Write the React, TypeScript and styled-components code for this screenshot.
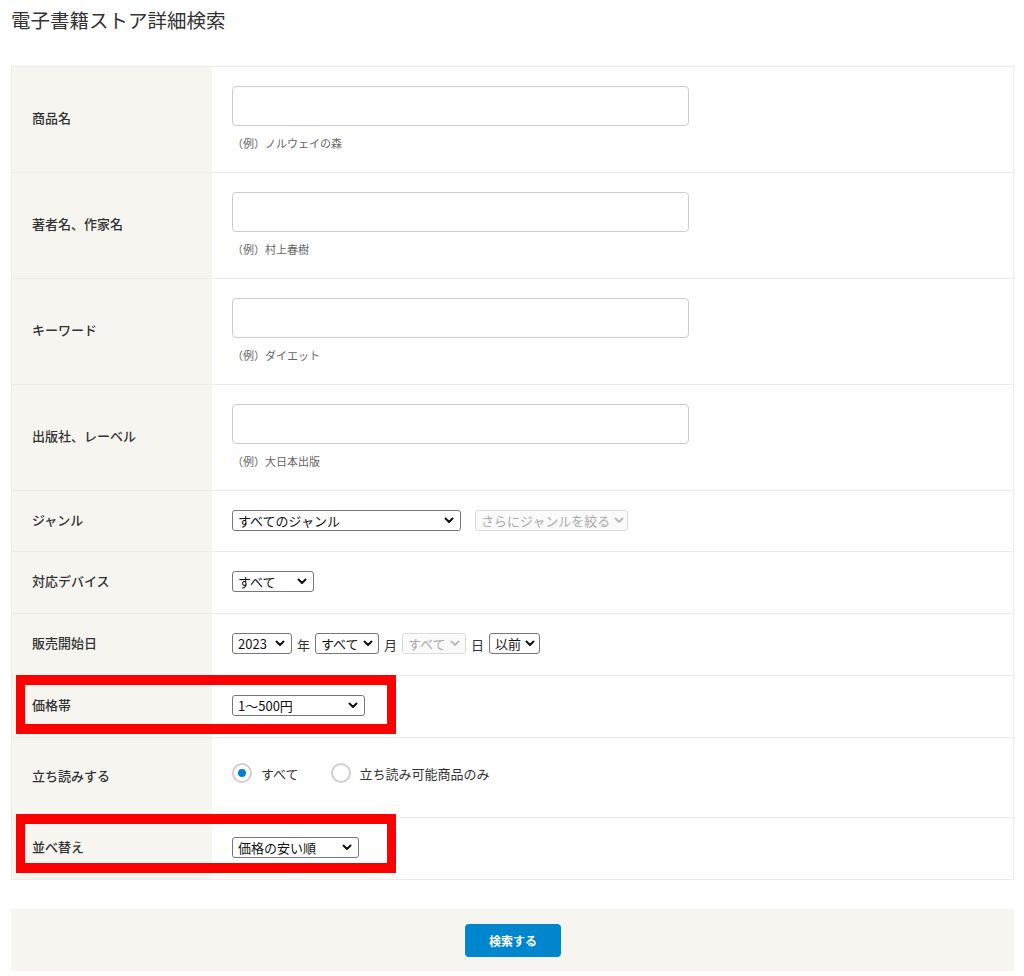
import styled, { createGlobalStyle } from "styled-components";

const GlobalStyle = createGlobalStyle`
  body {
    margin: 0;
    background: #fff;
    color: #333;
    font-family: "Noto Sans CJK JP", "Noto Sans", "Liberation Sans", sans-serif;
  }
`;

const Page = styled.div`
  padding: 6px 10px 6px 11px;
`;

const Title = styled.h1`
  margin: 0 0 32px;
  font-size: 19.5px;
  font-weight: 400;
  line-height: 28px;
  color: #333;
`;

const Table = styled.div`
  border: 1px solid #ececec;
  border-bottom: none;
`;

const Row = styled.div<{ $h: number }>`
  position: relative;
  display: grid;
  grid-template-columns: 200px 1fr;
  min-height: ${(p) => p.$h}px;
  border-bottom: 1px solid #ececec;
`;

const Label = styled.div`
  background: #f6f5ef;
  padding: 0 0 4px 20px;
  display: flex;
  align-items: center;
  font-size: 13px;
  font-weight: 500;
  color: #333;
`;

const Cell = styled.div<{ $pt?: number }>`
  padding: ${(p) => p.$pt ?? 0}px 20px 0 20px;
  display: flex;
  flex-direction: column;
  justify-content: ${(p) => (p.$pt === undefined ? "center" : "flex-start")};
`;

const Inline = styled.div`
  display: flex;
  align-items: center;
  gap: 5px;
  font-size: 13px;
  color: #333;
`;

const TextInput = styled.input`
  box-sizing: border-box;
  width: 457px;
  height: 40px;
  border: 1px solid #ccc;
  border-radius: 4px;
  background: #fff;
`;

const Hint = styled.div`
  margin-top: 9px;
  font-size: 11px;
  line-height: 16px;
  color: #666;
`;

const SelectBox = styled.div<{ $w: number; $disabled?: boolean }>`
  box-sizing: border-box;
  width: ${(p) => p.$w}px;
  height: 21px;
  padding: 0 6px 0 5px;
  margin-top: -2px;
  border: 1px solid ${(p) => (p.$disabled ? "#dcdcdc" : "#777")};
  border-radius: 3px;
  background: ${(p) => (p.$disabled ? "#fafafa" : "#fff")};
  color: ${(p) => (p.$disabled ? "#aaa" : "#111")};
  display: flex;
  align-items: center;
  justify-content: space-between;
  font-size: 13px;
  white-space: nowrap;
  flex-shrink: 0;
  svg {
    margin-left: 4px;
    flex-shrink: 0;
  }
`;

const Spacer = styled.span`
  width: 4px;
`;

const Radios = styled.div`
  display: flex;
  align-items: center;
  gap: 32px;
  font-size: 13px;
  color: #333;
`;

const RadioItem = styled.label`
  display: flex;
  align-items: center;
  gap: 9px;
`;

const RadioCircle = styled.span<{ $on?: boolean }>`
  box-sizing: border-box;
  width: 20px;
  height: 20px;
  border: 2px solid #cfcfcf;
  border-radius: 50%;
  background: #fff;
  display: flex;
  align-items: center;
  justify-content: center;
  &::after {
    content: "";
    width: 8px;
    height: 8px;
    border-radius: 50%;
    background: ${(p) => (p.$on ? "#0a7fd1" : "transparent")};
  }
`;

const Highlight = styled.div<{ $top: number; $h: number }>`
  position: absolute;
  left: 4px;
  top: ${(p) => p.$top}px;
  width: 380px;
  height: ${(p) => p.$h}px;
  box-sizing: border-box;
  border: 10px solid #ff0000;
  border-left-width: 9px;
  border-right-width: 9px;
  pointer-events: none;
`;

const Footer = styled.div`
  margin-top: 29px;
  height: 62px;
  background: #f6f5ef;
  display: flex;
  align-items: center;
  justify-content: center;
`;

const SearchButton = styled.button`
  width: 96px;
  height: 33px;
  border: none;
  border-radius: 4px;
  background: #0086cc;
  color: #fff;
  font-family: inherit;
  font-size: 12px;
  font-weight: 700;
  margin-left: 1px;
`;

function Chevron({ disabled }: { disabled?: boolean }) {
  return (
    <svg width="10" height="7" viewBox="0 0 10 7">
      <path
        d="M1.5 1.5 L5 5 L8.5 1.5"
        fill="none"
        stroke={disabled ? "#bbb" : "#111"}
        strokeWidth="2"
        strokeLinecap="round"
        strokeLinejoin="round"
      />
    </svg>
  );
}

function Select({ w, text, disabled }: { w: number; text: string; disabled?: boolean }) {
  return (
    <SelectBox $w={w} $disabled={disabled}>
      <span>{text}</span>
      <Chevron disabled={disabled} />
    </SelectBox>
  );
}

const textRows = [
  { label: "商品名", hint: "（例）ノルウェイの森" },
  { label: "著者名、作家名", hint: "（例）村上春樹" },
  { label: "キーワード", hint: "（例）ダイエット" },
  { label: "出版社、レーベル", hint: "（例）大日本出版" },
];

export default function App() {
  return (
    <Page>
      <GlobalStyle />
      <Title>電子書籍ストア詳細検索</Title>
      <Table>
        {textRows.map((r) => (
          <Row key={r.label} $h={105}>
            <Label>{r.label}</Label>
            <Cell $pt={19}>
              <TextInput />
              <Hint>{r.hint}</Hint>
            </Cell>
          </Row>
        ))}
        <Row $h={60}>
          <Label>ジャンル</Label>
          <Cell>
            <Inline>
              <Select w={229} text="すべてのジャンル" />
              <Spacer />
              <Select w={153} text="さらにジャンルを絞る" disabled />
            </Inline>
          </Cell>
        </Row>
        <Row $h={61}>
          <Label>対応デバイス</Label>
          <Cell>
            <Inline>
              <Select w={82} text="すべて" />
            </Inline>
          </Cell>
        </Row>
        <Row $h={61}>
          <Label>販売開始日</Label>
          <Cell>
            <Inline>
              <Select w={60} text="2023" />
              <span>年</span>
              <Select w={64} text="すべて" />
              <span>月</span>
              <Select w={64} text="すべて" disabled />
              <span>日</span>
              <Select w={51} text="以前" />
            </Inline>
          </Cell>
        </Row>
        <Row $h={61}>
          <Label>価格帯</Label>
          <Cell>
            <Inline>
              <Select w={133} text="1〜500円" />
            </Inline>
          </Cell>
          <Highlight $top={-1} $h={59} />
        </Row>
        <Row $h={79}>
          <Label>立ち読みする</Label>
          <Cell $pt={25}>
            <Radios>
              <RadioItem>
                <RadioCircle $on />
                すべて
              </RadioItem>
              <RadioItem>
                <RadioCircle />
                立ち読み可能商品のみ
              </RadioItem>
            </Radios>
          </Cell>
        </Row>
        <Row $h={61}>
          <Label>並べ替え</Label>
          <Cell>
            <Inline>
              <Select w={127} text="価格の安い順" />
            </Inline>
          </Cell>
          <Highlight $top={-4} $h={59} />
        </Row>
      </Table>
      <Footer>
        <SearchButton>検索する</SearchButton>
      </Footer>
    </Page>
  );
}
